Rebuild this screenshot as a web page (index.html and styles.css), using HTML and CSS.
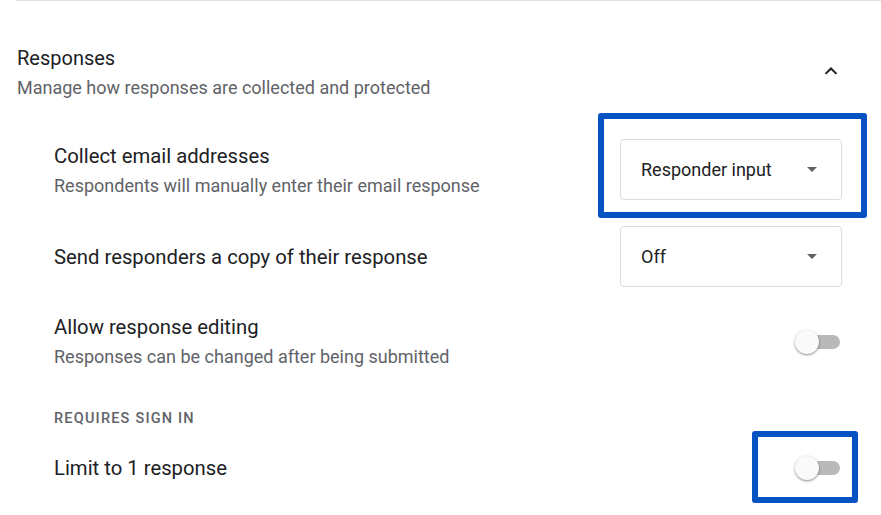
FILE: index.html
```html
<!DOCTYPE html>
<html>
<head>
<meta charset="utf-8">
<link rel="stylesheet" href="styles.css">
</head>
<body>
<div class="page">
  <div class="divider"></div>
  <div class="section-head">
    <div class="head-text">
      <div class="head-title">Responses</div>
      <div class="head-sub">Manage how responses are collected and protected</div>
    </div>
    <svg class="chevron" width="24" height="24" viewBox="0 0 24 24"><path d="M7.2 15.6L12 10.9l4.8 4.7L18.2 14.2 12 8l-6.2 6.2z" fill="#202124"/></svg>
  </div>

  <div class="row row-select first">
    <div class="row-text">
      <div class="row-title">Collect email addresses</div>
      <div class="row-sub">Respondents will manually enter their email response</div>
    </div>
    <div class="select">
      <span class="select-value">Responder input</span>
      <span class="select-arrow"></span>
    </div>
  </div>

  <div class="row row-select second">
    <div class="row-text">
      <div class="row-title">Send responders a copy of their response</div>
    </div>
    <div class="select">
      <span class="select-value">Off</span>
      <span class="select-arrow"></span>
    </div>
  </div>

  <div class="row third">
    <div class="row-text">
      <div class="row-title">Allow response editing</div>
      <div class="row-sub">Responses can be changed after being submitted</div>
    </div>
    <div class="switch"><span class="track"></span><span class="knob"></span></div>
  </div>

  <div class="group-label">REQUIRES SIGN IN</div>

  <div class="row fourth">
    <div class="row-text">
      <div class="row-title">Limit to 1 response</div>
    </div>
    <div class="switch"><span class="track"></span><span class="knob"></span></div>
  </div>

  <div class="mark mark-one"></div>
  <div class="mark mark-two"></div>
</div>
</body>
</html>
```

FILE: styles.css
```css
* { box-sizing: border-box; }
html, body { margin: 0; padding: 0; background: #fff; }
body {
  font-family: Roboto, "Liberation Sans", Arial, sans-serif;
  color: #202124;
  width: 881px;
  height: 515px;
  overflow: hidden;
}
.page {
  position: relative;
  width: 881px;
  height: 515px;
}
.divider {
  margin-left: 16px;
  height: 1px;
  background: #e0e0e0;
}
.section-head {
  display: flex;
  justify-content: space-between;
  align-items: flex-start;
  padding: 45px 39px 0 17px;
}
.head-title {
  font-size: 20px;
  line-height: 24px;
  color: #202124;
}
.head-sub {
  margin-top: 6px;
  font-size: 18px;
  line-height: 24px;
  color: #5f6368;
}
.chevron {
  margin-top: 13px;
  margin-right: -1px;
}
.row {
  display: flex;
  align-items: center;
  justify-content: space-between;
  padding: 0 39px 0 54px;
}
.row-title {
  font-size: 20.3px;
  line-height: 24px;
  color: #202124;
}
.row-sub {
  margin-top: 6px;
  font-size: 18px;
  line-height: 24px;
  color: #5f6368;
}
.first { margin-top: 39px; height: 61px; }
.first .row-text { padding-top: 3px; }
.second { margin-top: 26px; height: 61px; }
.third { margin-top: 28px; height: 54px; }
.fourth { margin-top: 27px; height: 24px; }
.select {
  width: 222px;
  height: 61px;
  border: 1px solid #dadce0;
  border-radius: 4px;
  display: flex;
  align-items: center;
  justify-content: space-between;
  padding: 0 24px 0 20px;
}
.select-value {
  font-size: 18px;
  color: #202124;
}
.select-arrow {
  width: 0;
  height: 0;
  border-left: 5.5px solid transparent;
  border-right: 5.5px solid transparent;
  border-top: 5.5px solid #5f6368;
}
.switch {
  position: relative;
  width: 46px;
  height: 24px;
  margin-right: 1px;
}
.track {
  position: absolute;
  left: 7px;
  top: 5px;
  width: 38px;
  height: 14px;
  border-radius: 7px;
  background: #b9b9b9;
}
.knob {
  position: absolute;
  left: 0;
  top: 0;
  width: 24px;
  height: 24px;
  border-radius: 50%;
  background: #fafafa;
  box-shadow: 0 1px 3px rgba(0,0,0,0.35), 0 1px 1px rgba(0,0,0,0.14);
}
.group-label {
  margin-top: 40px;
  padding-left: 54px;
  font-size: 14.5px;
  line-height: 20px;
  font-weight: 500;
  letter-spacing: 1.2px;
  color: #5f6368;
}
.mark {
  position: absolute;
  border: 6px solid #0752c3;
  border-radius: 3px;
}
.mark-one {
  left: 598px;
  top: 113px;
  width: 269px;
  height: 105px;
}
.mark-two {
  left: 752px;
  top: 431px;
  width: 106px;
  height: 72px;
}
```
